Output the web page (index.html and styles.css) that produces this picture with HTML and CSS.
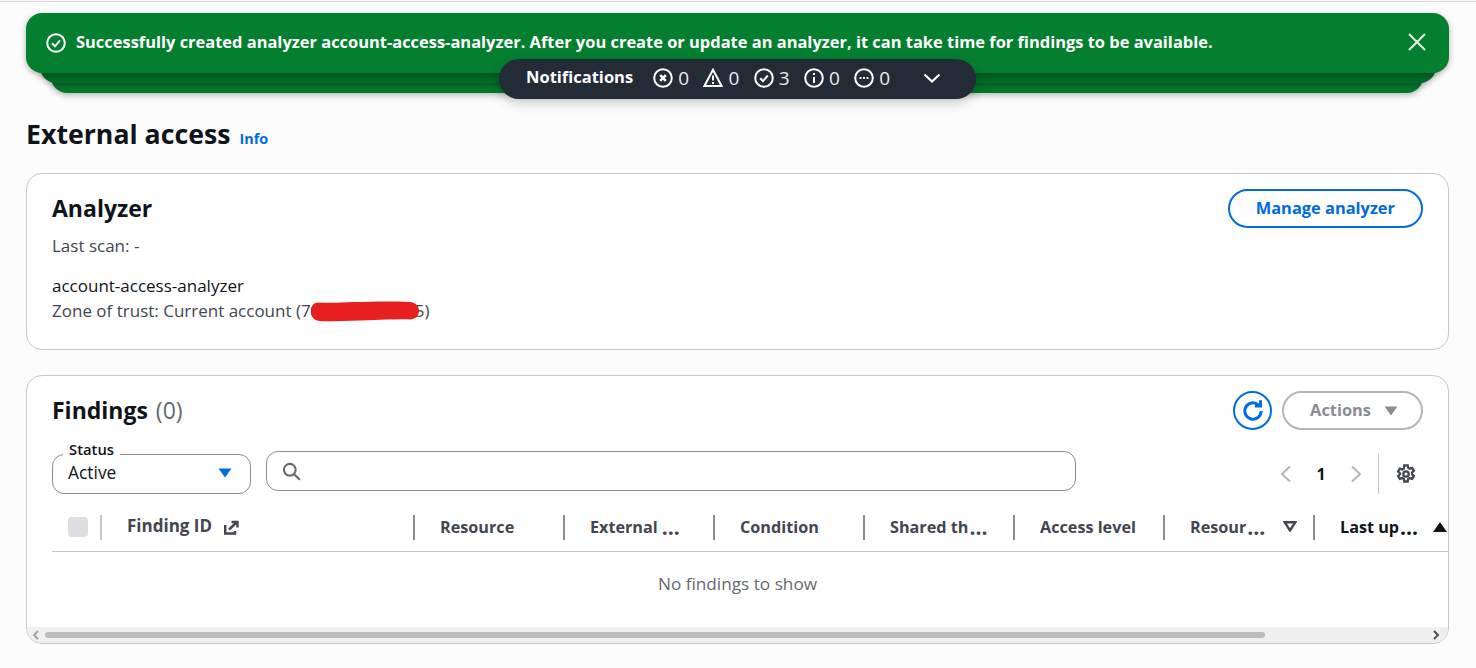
FILE: index.html
```html
<!DOCTYPE html>
<html lang="en">
<head>
<meta charset="utf-8">
<title>External access</title>
<link rel="stylesheet" href="styles.css">
</head>
<body>
<div class="topline"></div>
<div class="page">
  <div class="flash-stack">
    <div class="flash-layer layer-3"></div>
    <div class="flash-layer layer-2"></div>
    <div class="flash">
      <svg class="flash-icon" viewBox="0 0 20 20"><circle cx="10" cy="10" r="8.8"/><path d="M6 10.3l3 3 5-6"/></svg>
      <span class="flash-text">Successfully created analyzer account-access-analyzer. After you create or update an analyzer, it can take time for findings to be available.</span>
      <svg class="flash-close" viewBox="0 0 18 18"><path d="M1 1l16 16M17 1L1 17"/></svg>
    </div>
    <div class="notif">
      <span class="notif-title">Notifications</span>
      <span class="notif-item"><svg viewBox="0 0 20 20"><circle cx="10" cy="10" r="8.8"/><path class="bold" d="M7.200 7.200l5.600 5.600M12.800 7.200l-5.600 5.600"/></svg>0</span>
      <span class="notif-item"><svg viewBox="0 0 20 20"><path d="M10 1.800L1.400 18h17.200z"/><path d="M10 7.500v5M10 14v2"/></svg>0</span>
      <span class="notif-item"><svg viewBox="0 0 20 20"><circle cx="10" cy="10" r="8.800"/><path d="M6.200 10.300l2.800 2.800 4.800-5.600"/></svg>3</span>
      <span class="notif-item"><svg viewBox="0 0 20 20"><circle cx="10" cy="10" r="8.800"/><path d="M10 9v6M10 5v2"/></svg>0</span>
      <span class="notif-item"><svg viewBox="0 0 20 20"><circle cx="10" cy="10" r="8.800"/><path d="M5.600 10h1.800M9.100 10h1.800M12.600 10h1.800"/></svg>0</span>
      <svg class="notif-caret" viewBox="0 0 18 10"><path d="M1.500 1.500L9 8.500l7.500-7"/></svg>
    </div>
  </div>

  <header class="page-head">
    <h1>External access</h1>
    <a class="info">Info</a>
  </header>

  <section class="card analyzer">
    <div class="analyzer-top">
      <div>
        <h2>Analyzer</h2>
        <p class="muted">Last scan: -</p>
      </div>
      <button class="btn btn-primary">Manage analyzer</button>
    </div>
    <div class="analyzer-info">
      <p class="name">account-access-analyzer</p>
      <p class="muted zone">Zone of trust: Current account (7<span class="redact"><svg viewBox="0 0 110 20" preserveAspectRatio="none"><path d="M7 1.500C30 2.500 60 -0.500 100 1C112 2 112 17 100 17.500C70 17 40 20 8 19C-3 18 -3 2 7 1.500z"/></svg></span>5)</p>
    </div>
  </section>

  <section class="card findings">
    <div class="findings-top">
      <h2>Findings <span class="count">(0)</span></h2>
      <div class="findings-actions">
        <button class="icon-btn"><svg viewBox="0 0 20 20"><path d="M16.300 10a6.300 6.300 0 1 1-2-4.600"/><path d="M15.800 1.800v4.400h-4.400"/></svg></button>
        <button class="btn btn-disabled">Actions <svg class="caret" viewBox="0 0 14 10"><path d="M0.500 0.500h13L7 9.500z"/></svg></button>
      </div>
    </div>
    <div class="filters">
      <div class="status-select">
        <span class="status-label">Status</span>
        <span class="status-value">Active</span>
        <svg class="select-caret" viewBox="0 0 14 10"><path d="M0.500 0.500h13L7 9.500z"/></svg>
      </div>
      <div class="search">
        <svg viewBox="0 0 20 20"><circle cx="8.200" cy="8.200" r="6.200"/><path d="M12.800 12.800l6 6"/></svg>
      </div>
      <div class="pager">
        <svg class="chev" viewBox="0 0 12 18"><path d="M10 1.500L2 9l8 7.500"/></svg>
        <span class="page-num">1</span>
        <svg class="chev" viewBox="0 0 12 18"><path d="M2 1.500L10 9l-8 7.500"/></svg>
        <span class="pager-sep"></span>
        <svg class="gear" viewBox="0 0 20 20"><path d="M8.300 1.300h3.400l.5 2.500 1.600.9 2.400-.8 1.700 2.900-1.900 1.700v1.800l1.900 1.700-1.700 2.900-2.400-.8-1.600.9-.5 2.500H8.300l-.5-2.500-1.600-.9-2.400.8-1.700-2.900 1.900-1.700V9.200L2.100 7.500l1.700-2.900 2.400.8 1.600-.9z"/><circle cx="10" cy="10" r="2.700"/></svg>
      </div>
    </div>
    <div class="table-wrap">
      <div class="thead">
        <div class="th th-check"><span class="checkbox"></span></div>
        <div class="th th-id">Finding ID <svg class="ext" viewBox="0 0 16 16"><path d="M2.200 5v8.500H12V11"/><path d="M6 9.500L14 2M8.500 2h6v5.500"/></svg></div>
        <div class="th">Resource</div>
        <div class="th">External<span class="ell ell-gap">…</span></div>
        <div class="th">Condition</div>
        <div class="th">Shared th<span class="ell">…</span></div>
        <div class="th">Access level</div>
        <div class="th th-res">Resour<span class="ell">…</span><svg class="sort" viewBox="0 0 14 11"><path d="M1.800 1.300h10.400L7 9.500z"/></svg></div>
        <div class="th th-last">Last up<span class="ell">…</span><svg class="sort-up" viewBox="0 0 14 10"><path d="M0 10L7 0l7 10z"/></svg></div>
      </div>
      <div class="empty">No findings to show</div>
    </div>
    <div class="hscroll">
      <svg class="scroll-arrow" viewBox="0 0 8 10"><path d="M6 1L2 5l4 4"/></svg>
      <span class="scroll-thumb"></span>
      <svg class="scroll-arrow dark" viewBox="0 0 8 10"><path d="M2 1l4 4-4 4"/></svg>
    </div>
  </section>
</div>
</body>
</html>
```
FILE: styles.css
```css
* { box-sizing: border-box; }
html, body { margin: 0; padding: 0; }
body {
  height: 668px;
  overflow: hidden;
  background: #fcfcfc;
  color: #0f141a;
  font-family: "Open Sans", "Noto Sans", sans-serif;
  font-size: 17px;
}
.topline { height: 2px; border-bottom: 1px solid #d5d5d7; }
.page { padding: 11px 27px 0 26px; }
p, h1, h2 { margin: 0; }

.flash-stack { position: relative; height: 80px; }
.flash {
  position: relative;
  height: 60px;
  background: #037f2f;
  border-radius: 16px;
  color: #fff;
  display: flex;
  align-items: center;
  padding: 0 23px 3px 20px;
  box-shadow: 0 2px 6px rgba(0,0,0,.3);
}
.flash-layer { position: absolute; border-radius: 16px; box-shadow: 0 2px 6px rgba(0,0,0,.3); }
.layer-2 { left: 14px; right: 13px; top: 10px; height: 60px; background: #036a27; }
.layer-3 { left: 25px; right: 26px; top: 20px; height: 60px; background: #04782c; }
.flash-icon { width: 20px; height: 20px; fill: none; stroke: #fff; stroke-width: 2; margin-right: 10px; margin-top: 2px; }
.flash-text { font-size: 16.440px; font-weight: 700; flex: 1; white-space: nowrap; }
.flash-close { width: 18px; height: 18px; fill: none; stroke: #e6f2e9; stroke-width: 2; }

.notif {
  position: absolute;
  left: 473px;
  top: 46px;
  width: 477px;
  height: 40px;
  border-radius: 20px;
  background: #232b37;
  color: #fff;
  display: flex;
  align-items: center;
  padding: 0 0 2px 27px;
  box-shadow: 0 4px 12px rgba(0,0,0,.2);
}
.notif-title { font-weight: 700; font-size: 16.500px; margin: 0 20px 3px 0; }
.notif-item { display: flex; align-items: center; gap: 5px; font-size: 19px; width: 50.300px; color: #e9ebed; }
.notif-item svg { width: 20px; height: 20px; fill: none; stroke: #fff; stroke-width: 2; }
.notif-item .bold { stroke-width: 2.600; }
.notif-caret { width: 18px; height: 10px; fill: none; stroke: #fff; stroke-width: 2.200; margin-left: 18px; }

.page-head { display: flex; align-items: baseline; gap: 9px; margin-top: 21px; height: 59px; }
h1 { font-size: 26.700px; font-weight: 700; line-height: 39px; }
.info { color: #006ce0; font-weight: 700; font-size: 14.400px; }

.card {
  background: #fff;
  border: 1px solid #c6c6cd;
  border-radius: 16px;
  padding: 0 25px;
}
.analyzer { height: 177px; }
.analyzer-top { display: flex; justify-content: space-between; align-items: flex-start; padding-top: 14px; }
.analyzer-top .btn { margin-top: 1px; }
h2 { font-size: 23px; font-weight: 700; line-height: 40px; }
.muted { color: #424650; line-height: 24px; }
.analyzer-top .muted { margin-top: 6px; }
.analyzer-info { margin-top: 15px; }
.name { line-height: 26px; }
.redact { display: inline-block; width: 109px; height: 21px; vertical-align: -5px; margin-right: -5px; position: relative; }
.redact svg { display: block; width: 100%; height: 100%; fill: #e81f1f; }

.btn {
  font-family: inherit;
  font-weight: 700;
  font-size: 16.400px;
  height: 39px;
  border-radius: 20px;
  background: #fff;
  padding: 0 26px 2px;
  display: inline-flex;
  align-items: center;
}
.btn-primary { border: 2px solid #006ce0; color: #006ce0; }
.btn-disabled { border: 2px solid #b4b4bb; color: #8c8c94; gap: 13px; padding-right: 23px; }
.caret { width: 14px; height: 10px; fill: #8c8c94; margin-top: 2px; }

.findings { height: 269px; margin-top: 25px; padding: 0 0 0 25px; overflow: hidden; position: relative; }
.findings-top { display: flex; justify-content: space-between; padding: 14px 25px 0 0; height: 54px; }
.count { font-weight: 400; color: #656871; margin-left: 2px; }
.findings-actions { display: flex; gap: 10px; margin-top: 1px; }
.icon-btn { width: 39px; height: 39px; border-radius: 50%; border: 2px solid #006ce0; background: #fff; padding: 0; display: flex; align-items: center; justify-content: center; }
.icon-btn svg { width: 26px; height: 26px; fill: none; stroke: #006ce0; stroke-width: 2.300; }

.filters { display: flex; align-items: flex-start; height: 62px; padding-right: 32px; margin-top: 21px; }
.status-select { position: relative; width: 199px; height: 40px; margin-top: 3px; border: 1px solid #8c8c94; border-radius: 12px; padding: 4px 15px; }
.status-label { position: absolute; top: -15px; left: 10px; padding: 0 6px; background: #fff; font-size: 14.800px; font-weight: 600; line-height: 18px; }
.status-value { line-height: 26px; font-size: 17.400px; }
.select-caret { position: absolute; right: 18px; top: 13px; width: 14px; height: 10px; fill: #006ce0; }
.search { width: 810px; height: 40px; margin-left: 15px; border: 1px solid #8c8c94; border-radius: 12px; display: flex; align-items: center; padding-left: 15px; }
.search svg { width: 19px; height: 19px; fill: none; stroke: #656871; stroke-width: 2.200; }
.pager { margin-left: auto; margin-top: 3px; display: flex; align-items: center; height: 40px; }
.chev { width: 12px; height: 18px; fill: none; stroke: #b4b4bb; stroke-width: 2; }
.page-num { font-weight: 700; width: 58px; text-align: center; font-size: 16px; }
.pager-sep { width: 1px; height: 40px; background: #c6c6cd; margin: 0 17px 0 16px; }
.gear { width: 20px; height: 20px; fill: none; stroke: #424650; stroke-width: 2.300; }

.table-wrap { width: 1396px; overflow: hidden; }
.thead { display: flex; height: 39px; border-bottom: 1px solid #c6c6cd; width: 1396px; }
.th { flex: 0 0 150px; height: 38px; padding: 0 0 11px 26px; position: relative; color: #424650; font-weight: 700; font-size: 16.200px; line-height: 24px; white-space: nowrap; display: flex; align-items: center; }
.th::after { content: ""; position: absolute; right: -1px; top: 2px; width: 2px; height: 25px; background: #8c8c94; }
.th-check { flex: 0 0 50px; padding: 4px 0 0 16px; align-items: flex-start; }
.th-check::after { background: #c6c6cd; right: 0; }
.checkbox { display: block; width: 20px; height: 20px; background: #dedee3; border-radius: 4px; }
.th-id { flex: 0 0 312px; padding: 0 0 13px 25px; font-size: 17px; gap: 11px; }
.th-last { color: #0f141a; flex: 0 0 134px; }
.th-last::after { display: none; }
.ell { font-size: 1.300em; line-height: 1; margin-left: 1px; }
.ell-gap { margin-left: 4px; }
.ext { width: 16px; height: 16px; fill: none; stroke: #424650; stroke-width: 2.400; margin-top: 4px; }
.sort { width: 14px; height: 11px; fill: none; stroke: #424650; stroke-width: 2.400; margin-left: auto; margin-right: 17px; }
.sort-up { width: 14px; height: 10px; fill: #0f141a; margin-left: auto; margin-right: 1px; }
.empty { height: 65px; text-align: center; color: #656871; padding-top: 20px; line-height: 24px; font-size: 17.200px; margin-left: -25px; }

.hscroll { position: absolute; left: 0; right: 0; bottom: 0; height: 16px; background: #f0f0f0; display: flex; align-items: center; padding: 0 8px 0 5px; }
.scroll-arrow { width: 8px; height: 10px; fill: none; stroke: #a3a3a3; stroke-width: 2; }
.scroll-arrow.dark { stroke: #505050; margin-left: auto; }
.scroll-thumb { width: 1220px; height: 6px; border-radius: 3px; background: #bdbdbd; margin-left: 5px; }
```
